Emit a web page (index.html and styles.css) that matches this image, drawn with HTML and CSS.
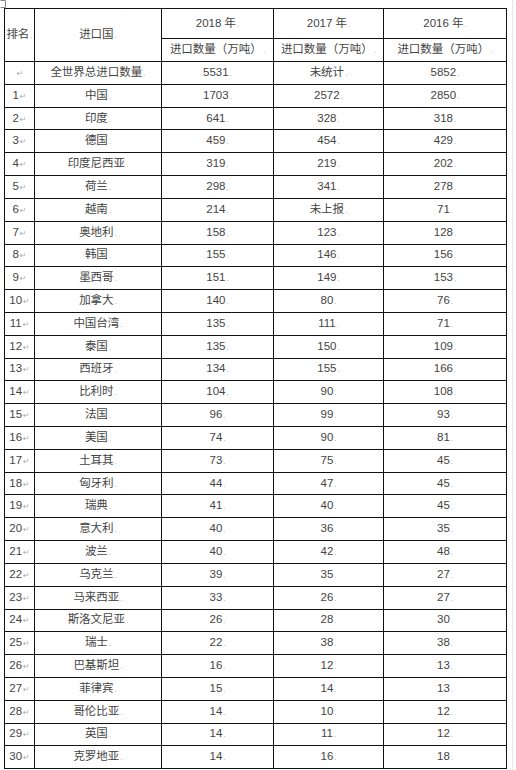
FILE: index.html
```html
<!DOCTYPE html>
<html lang="zh">
<head>
<meta charset="utf-8">
<title>进口国排名</title>
<link rel="stylesheet" href="styles.css">
</head>
<body>
<div class="page">
<svg class="handle" width="6" height="8" viewBox="0 0 6 8"><path d="M0.5 0.5H5.5V7.5H0.5" fill="none" stroke="#888" stroke-width="1"/></svg>
<table class="grid">
<colgroup><col class="c-rank"><col class="c-name"><col class="c-y18"><col class="c-y17"><col class="c-y16"></colgroup>
<thead>
<tr class="h1"><th rowspan="2">排名<span class="m">.</span></th><th rowspan="2">进口国<span class="m">.</span></th><th>2018 年<span class="m">.</span></th><th>2017 年<span class="m">.</span></th><th>2016 年<span class="m">.</span></th></tr>
<tr class="h2"><th>进口数量（万吨）<span class="m">.</span></th><th>进口数量（万吨）<span class="m">.</span></th><th>进口数量（万吨）<span class="m">.</span></th></tr>
</thead>
<tbody>
<tr><td><span class="r">↵</span></td><td>全世界总进口数量<span class="m">.</span></td><td>5531<span class="m">.</span></td><td>未统计<span class="m">.</span></td><td>5852<span class="m">.</span></td></tr>
<tr><td>1<span class="r">↵</span></td><td>中国<span class="m">.</span></td><td>1703<span class="m">.</span></td><td>2572<span class="m">.</span></td><td>2850<span class="m">.</span></td></tr>
<tr><td>2<span class="r">↵</span></td><td>印度<span class="m">.</span></td><td>641<span class="m">.</span></td><td>328<span class="m">.</span></td><td>318<span class="m">.</span></td></tr>
<tr><td>3<span class="r">↵</span></td><td>德国<span class="m">.</span></td><td>459<span class="m">.</span></td><td>454<span class="m">.</span></td><td>429<span class="m">.</span></td></tr>
<tr><td>4<span class="r">↵</span></td><td>印度尼西亚<span class="m">.</span></td><td>319<span class="m">.</span></td><td>219<span class="m">.</span></td><td>202<span class="m">.</span></td></tr>
<tr><td>5<span class="r">↵</span></td><td>荷兰<span class="m">.</span></td><td>298<span class="m">.</span></td><td>341<span class="m">.</span></td><td>278<span class="m">.</span></td></tr>
<tr><td>6<span class="r">↵</span></td><td>越南<span class="m">.</span></td><td>214<span class="m">.</span></td><td>未上报<span class="m">.</span></td><td>71<span class="m">.</span></td></tr>
<tr><td>7<span class="r">↵</span></td><td>奥地利<span class="m">.</span></td><td>158<span class="m">.</span></td><td>123<span class="m">.</span></td><td>128<span class="m">.</span></td></tr>
<tr><td>8<span class="r">↵</span></td><td>韩国<span class="m">.</span></td><td>155<span class="m">.</span></td><td>146<span class="m">.</span></td><td>156<span class="m">.</span></td></tr>
<tr><td>9<span class="r">↵</span></td><td>墨西哥<span class="m">.</span></td><td>151<span class="m">.</span></td><td>149<span class="m">.</span></td><td>153<span class="m">.</span></td></tr>
<tr><td>10<span class="r">↵</span></td><td>加拿大<span class="m">.</span></td><td>140<span class="m">.</span></td><td>80<span class="m">.</span></td><td>76<span class="m">.</span></td></tr>
<tr><td>11<span class="r">↵</span></td><td>中国台湾<span class="m">.</span></td><td>135<span class="m">.</span></td><td>111<span class="m">.</span></td><td>71<span class="m">.</span></td></tr>
<tr><td>12<span class="r">↵</span></td><td>泰国<span class="m">.</span></td><td>135<span class="m">.</span></td><td>150<span class="m">.</span></td><td>109<span class="m">.</span></td></tr>
<tr><td>13<span class="r">↵</span></td><td>西班牙<span class="m">.</span></td><td>134<span class="m">.</span></td><td>155<span class="m">.</span></td><td>166<span class="m">.</span></td></tr>
<tr><td>14<span class="r">↵</span></td><td>比利时<span class="m">.</span></td><td>104<span class="m">.</span></td><td>90<span class="m">.</span></td><td>108<span class="m">.</span></td></tr>
<tr><td>15<span class="r">↵</span></td><td>法国<span class="m">.</span></td><td>96<span class="m">.</span></td><td>99<span class="m">.</span></td><td>93<span class="m">.</span></td></tr>
<tr><td>16<span class="r">↵</span></td><td>美国<span class="m">.</span></td><td>74<span class="m">.</span></td><td>90<span class="m">.</span></td><td>81<span class="m">.</span></td></tr>
<tr><td>17<span class="r">↵</span></td><td>土耳其<span class="m">.</span></td><td>73<span class="m">.</span></td><td>75<span class="m">.</span></td><td>45<span class="m">.</span></td></tr>
<tr><td>18<span class="r">↵</span></td><td>匈牙利<span class="m">.</span></td><td>44<span class="m">.</span></td><td>47<span class="m">.</span></td><td>45<span class="m">.</span></td></tr>
<tr><td>19<span class="r">↵</span></td><td>瑞典<span class="m">.</span></td><td>41<span class="m">.</span></td><td>40<span class="m">.</span></td><td>45<span class="m">.</span></td></tr>
<tr><td>20<span class="r">↵</span></td><td>意大利<span class="m">.</span></td><td>40<span class="m">.</span></td><td>36<span class="m">.</span></td><td>35<span class="m">.</span></td></tr>
<tr><td>21<span class="r">↵</span></td><td>波兰<span class="m">.</span></td><td>40<span class="m">.</span></td><td>42<span class="m">.</span></td><td>48<span class="m">.</span></td></tr>
<tr><td>22<span class="r">↵</span></td><td>乌克兰<span class="m">.</span></td><td>39<span class="m">.</span></td><td>35<span class="m">.</span></td><td>27<span class="m">.</span></td></tr>
<tr><td>23<span class="r">↵</span></td><td>马来西亚<span class="m">.</span></td><td>33<span class="m">.</span></td><td>26<span class="m">.</span></td><td>27<span class="m">.</span></td></tr>
<tr><td>24<span class="r">↵</span></td><td>斯洛文尼亚<span class="m">.</span></td><td>26<span class="m">.</span></td><td>28<span class="m">.</span></td><td>30<span class="m">.</span></td></tr>
<tr><td>25<span class="r">↵</span></td><td>瑞士<span class="m">.</span></td><td>22<span class="m">.</span></td><td>38<span class="m">.</span></td><td>38<span class="m">.</span></td></tr>
<tr><td>26<span class="r">↵</span></td><td>巴基斯坦<span class="m">.</span></td><td>16<span class="m">.</span></td><td>12<span class="m">.</span></td><td>13<span class="m">.</span></td></tr>
<tr><td>27<span class="r">↵</span></td><td>菲律宾<span class="m">.</span></td><td>15<span class="m">.</span></td><td>14<span class="m">.</span></td><td>13<span class="m">.</span></td></tr>
<tr><td>28<span class="r">↵</span></td><td>哥伦比亚<span class="m">.</span></td><td>14<span class="m">.</span></td><td>10<span class="m">.</span></td><td>12<span class="m">.</span></td></tr>
<tr><td>29<span class="r">↵</span></td><td>英国<span class="m">.</span></td><td>14<span class="m">.</span></td><td>11<span class="m">.</span></td><td>12<span class="m">.</span></td></tr>
<tr><td>30<span class="r">↵</span></td><td>克罗地亚<span class="m">.</span></td><td>14<span class="m">.</span></td><td>16<span class="m">.</span></td><td>18<span class="m">.</span></td></tr>
</tbody>
</table>
</div>
</body>
</html>
```
FILE: styles.css
```css
html, body {
  margin: 0;
  padding: 0;
  background: #fff;
}
.page {
  position: relative;
  width: 516px;
  height: 770px;
  padding: 8px 0 0 4px;
  box-sizing: border-box;
  font-family: "Liberation Sans", "Noto Sans CJK SC", sans-serif;
  font-size: 11.5px;
  color: #444;
  overflow: hidden;
}
.page::after {
  content: "";
  position: absolute;
  left: 512px;
  top: 0;
  width: 0;
  height: 770px;
  border-left: 1px dotted #d8d8d8;
}
.handle {
  position: absolute;
  left: 0;
  top: 0;
}
.grid {
  border-collapse: collapse;
  table-layout: fixed;
  width: 502px;
}
.c-rank { width: 30px; }
.c-name { width: 127px; }
.c-y18 { width: 112px; }
.c-y17 { width: 110px; }
.c-y16 { width: 123px; }
.grid th,
.grid td {
  border: 1px solid #111;
  padding: 0;
  text-align: center;
  vertical-align: middle;
  font-weight: normal;
  line-height: 14px;
  white-space: nowrap;
  overflow: hidden;
}
.grid tr.h1 { height: 30px; }
.grid tr.h2 { height: 23px; }
.grid tbody tr { height: 22.82px; }
.m {
  color: #9a9a9a;
  font-size: 8px;
  margin-left: 1px;
}
.r {
  color: #aaa;
  font-family: "DejaVu Sans", sans-serif;
  font-size: 8px;
  margin-left: 1px;
}
```
